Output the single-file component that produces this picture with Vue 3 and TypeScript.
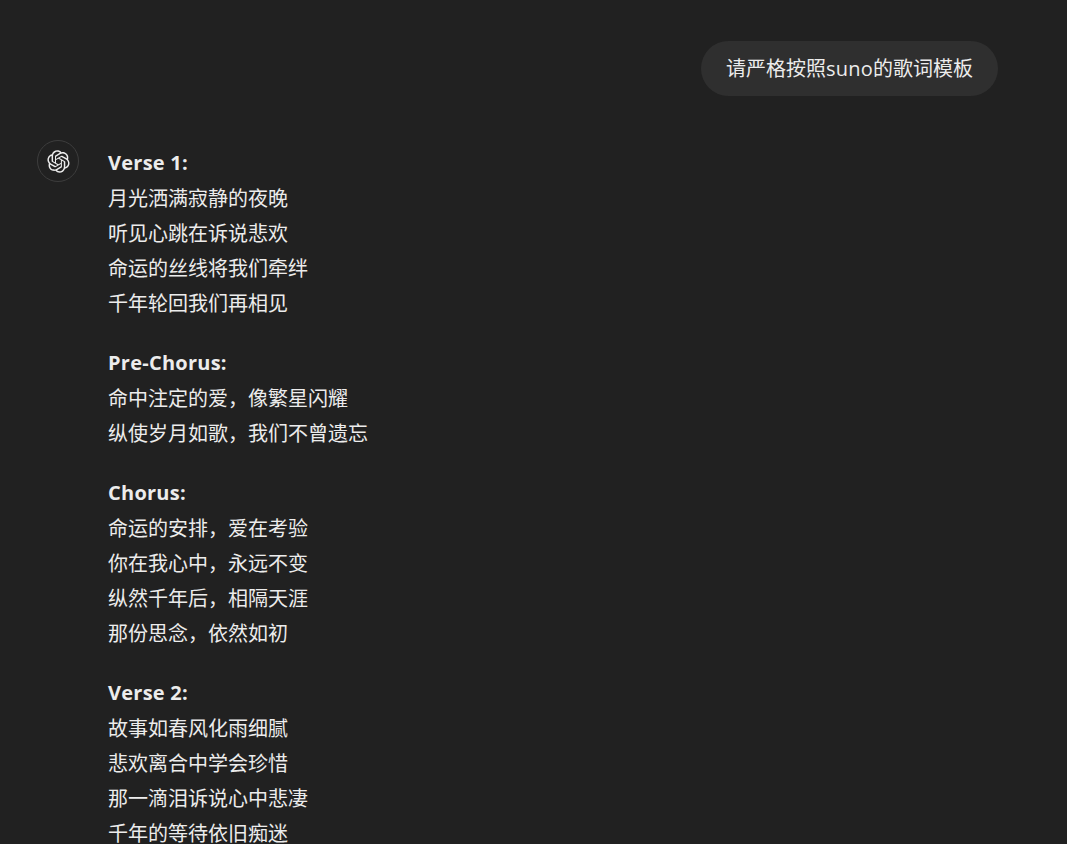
<script setup lang="ts">
interface Stanza { title: string; lines: string[] }
const stanzas: Stanza[] = [
  { title: 'Verse 1:', lines: ['月光洒满寂静的夜晚', '听见心跳在诉说悲欢', '命运的丝线将我们牵绊', '千年轮回我们再相见'] },
  { title: 'Pre-Chorus:', lines: ['命中注定的爱\uFF0C像繁星闪耀', '纵使岁月如歌\uFF0C我们不曾遗忘'] },
  { title: 'Chorus:', lines: ['命运的安排\uFF0C爱在考验', '你在我心中\uFF0C永远不变', '纵然千年后\uFF0C相隔天涯', '那份思念\uFF0C依然如初'] },
  { title: 'Verse 2:', lines: ['故事如春风化雨细腻', '悲欢离合中学会珍惜', '那一滴泪诉说心中悲凄', '千年的等待依旧痴迷'] },
]
</script>

<template>
  <main class="chat">
    <section class="user-row">
      <div class="bubble"><span>请严格按照<span class="latin">suno</span>的歌词模板</span></div>
    </section>
    <section class="reply">
      <div class="avatar">
        <svg class="logo" viewBox="0 0 41 41" fill="none" aria-hidden="true">
          <path fill="currentColor" d="M37.5324 16.8707C37.9808 15.5241 38.1363 14.0974 37.9886 12.6859C37.8409 11.2744 37.3934 9.91076 36.676 8.68622C35.6126 6.83404 33.9882 5.3676 32.0373 4.4985C30.0864 3.62941 27.9098 3.40259 25.8215 3.85078C24.8796 2.7893 23.7219 1.94125 22.4257 1.36341C21.1295 0.785575 19.7249 0.491269 18.3058 0.500197C16.1708 0.495044 14.0893 1.16803 12.3614 2.42214C10.6335 3.67624 9.34853 5.44666 8.6917 7.47815C7.30085 7.76286 5.98686 8.3414 4.8377 9.17505C3.68854 10.0087 2.73073 11.0782 2.02839 12.312C0.956464 14.1591 0.498905 16.2988 0.721698 18.4228C0.944492 20.5467 1.83612 22.5449 3.268 24.1293C2.81966 25.4759 2.66413 26.9026 2.81182 28.3141C2.95951 29.7256 3.40701 31.0892 4.12437 32.3138C5.18791 34.1659 6.8123 35.6322 8.76321 36.5013C10.7141 37.3704 12.8907 37.5973 14.9789 37.1492C15.9208 38.2107 17.0786 39.0587 18.3747 39.6366C19.6709 40.2144 21.0755 40.5087 22.4946 40.4998C24.6307 40.5054 26.7133 39.8321 28.4418 38.5772C30.1704 37.3223 31.4556 35.5506 32.1119 33.5179C33.5027 33.2332 34.8167 32.6547 35.9659 31.821C37.115 30.9874 38.0728 29.9178 38.7752 28.684C39.8458 26.8371 40.3023 24.6979 40.0789 22.5748C39.8556 20.4517 38.9639 18.4544 37.5324 16.8707ZM22.4978 37.8849C20.7443 37.8874 19.0459 37.2733 17.6994 36.1501C17.7601 36.117 17.8666 36.0586 17.936 36.0161L25.9004 31.4156C26.1003 31.3019 26.2663 31.137 26.3813 30.9378C26.4964 30.7386 26.5563 30.5124 26.5549 30.2825V19.0542L29.9213 20.998C29.9389 21.0068 29.9541 21.0198 29.9656 21.0359C29.977 21.052 29.9842 21.0707 29.9867 21.0902V30.3889C29.9842 32.375 29.1946 34.2791 27.7909 35.6841C26.3872 37.0892 24.4838 37.8806 22.4978 37.8849ZM6.39227 31.0064C5.51397 29.4888 5.19742 27.7107 5.49804 25.9832C5.55718 26.0187 5.66048 26.0818 5.73461 26.1244L13.699 30.7248C13.8975 30.8408 14.1233 30.902 14.3532 30.902C14.583 30.902 14.8088 30.8408 15.0073 30.7248L24.731 25.1103V28.9979C24.7321 29.0177 24.7283 29.0376 24.7199 29.0556C24.7115 29.0736 24.6988 29.0893 24.6829 29.1012L16.6317 33.7497C14.9096 34.7416 12.8643 35.0097 10.9447 34.4954C9.02506 33.9811 7.38785 32.7263 6.39227 31.0064ZM4.29707 13.6194C5.17156 12.0998 6.55279 10.9364 8.19885 10.3327C8.19885 10.4013 8.19491 10.5228 8.19491 10.6071V19.808C8.19351 20.0378 8.25334 20.2638 8.36823 20.4629C8.48312 20.6619 8.64893 20.8267 8.84863 20.9404L18.5723 26.5542L15.206 28.4979C15.1894 28.5089 15.1703 28.5155 15.1505 28.5173C15.1307 28.5191 15.1107 28.516 15.0924 28.5082L7.04046 23.8557C5.32135 22.8601 4.06716 21.2235 3.55289 19.3046C3.03862 17.3858 3.30624 15.3413 4.29707 13.6194ZM31.955 20.0556L22.2312 14.4411L25.5976 12.4981C25.6142 12.4872 25.6333 12.4805 25.6531 12.4787C25.6729 12.4769 25.6928 12.4801 25.7111 12.4879L33.7631 17.1364C34.9967 17.849 36.0017 18.8982 36.6606 20.1613C37.3194 21.4244 37.6047 22.849 37.4832 24.2684C37.3617 25.6878 36.8382 27.0432 35.9743 28.1759C35.1103 29.3086 33.9415 30.1717 32.6047 30.6641C32.6047 30.5947 32.6047 30.4733 32.6047 30.3889V21.188C32.6066 20.9586 32.5474 20.7328 32.4332 20.5338C32.319 20.3348 32.154 20.1698 31.955 20.0556ZM35.3055 15.0128C35.2464 14.9765 35.1431 14.9142 35.069 14.8717L27.1045 10.2712C26.906 10.1554 26.6803 10.0943 26.4504 10.0943C26.2206 10.0943 25.9948 10.1554 25.7963 10.2712L16.0726 15.8858V11.9982C16.0715 11.9783 16.0753 11.9585 16.0837 11.9405C16.0921 11.9225 16.1048 11.9068 16.1207 11.8949L24.1719 7.25025C25.4053 6.53903 26.8158 6.19376 28.2383 6.25482C29.6608 6.31589 31.0364 6.78077 32.2044 7.59508C33.3723 8.40939 34.2842 9.53945 34.8334 10.8531C35.3826 12.1667 35.5464 13.6095 35.3055 15.0128ZM14.2424 21.9419L10.8752 19.9981C10.8576 19.9893 10.8423 19.9763 10.8309 19.9602C10.8195 19.9441 10.8122 19.9254 10.8098 19.9058V10.6071C10.8107 9.18295 11.2173 7.78848 11.9819 6.58696C12.7466 5.38544 13.8377 4.42659 15.1275 3.82264C16.4173 3.21869 17.8524 2.99464 19.2649 3.1767C20.6775 3.35876 22.0089 3.93941 23.1034 4.85067C23.0427 4.88379 22.937 4.94215 22.8668 4.98473L14.9024 9.58517C14.7025 9.69878 14.5366 9.86356 14.4215 10.0626C14.3065 10.2616 14.2466 10.4877 14.2479 10.7175L14.2424 21.9419ZM16.071 17.9991L20.4018 15.4978L24.7325 17.9975V22.9985L20.4018 25.4983L16.071 22.9985V17.9991Z" />
        </svg>
      </div>
      <div class="lyrics">
        <div v-for="s in stanzas" :key="s.title" class="stanza">
          <strong class="title">{{ s.title }}</strong>
          <div v-for="line in s.lines" :key="line" class="line">{{ line }}</div>
        </div>
      </div>
    </section>
  </main>
</template>

<style scoped>
.chat {
  height: 844px;
  overflow: hidden;
  box-sizing: border-box;
  padding-top: 41px;
  background: #212121;
  color: #ececec;
  font-family: "Open Sans", "Noto Sans CJK SC", sans-serif;
  font-size: 20px;
}
.user-row {
  display: flex;
  justify-content: flex-end;
  padding-right: 69px;
}
.bubble {
  height: 55px;
  box-sizing: border-box;
  padding: 0 25px;
  display: flex;
  align-items: center;
  border-radius: 28px;
  background: #2f2f2f;
  line-height: 55px;
}
.latin {
  letter-spacing: 0.25px;
}
.reply {
  display: flex;
  align-items: flex-start;
  gap: 29px;
  margin-top: 44px;
  padding-left: 37px;
}
.avatar {
  width: 42px;
  height: 42px;
  flex: none;
  box-sizing: border-box;
  display: flex;
  align-items: center;
  justify-content: center;
  border: 1px solid #3d3d3d;
  border-radius: 50%;
}
.logo {
  width: 23px;
  height: 23px;
}
.lyrics {
  padding-top: 5px;
  line-height: 35px;
}
.stanza {
  margin-bottom: 24px;
}
.title {
  display: block;
  line-height: 36px;
  font-weight: 700;
  letter-spacing: 0.25px;
}
</style>

<style>
html, body {
  margin: 0;
  background: #212121;
}
</style>
